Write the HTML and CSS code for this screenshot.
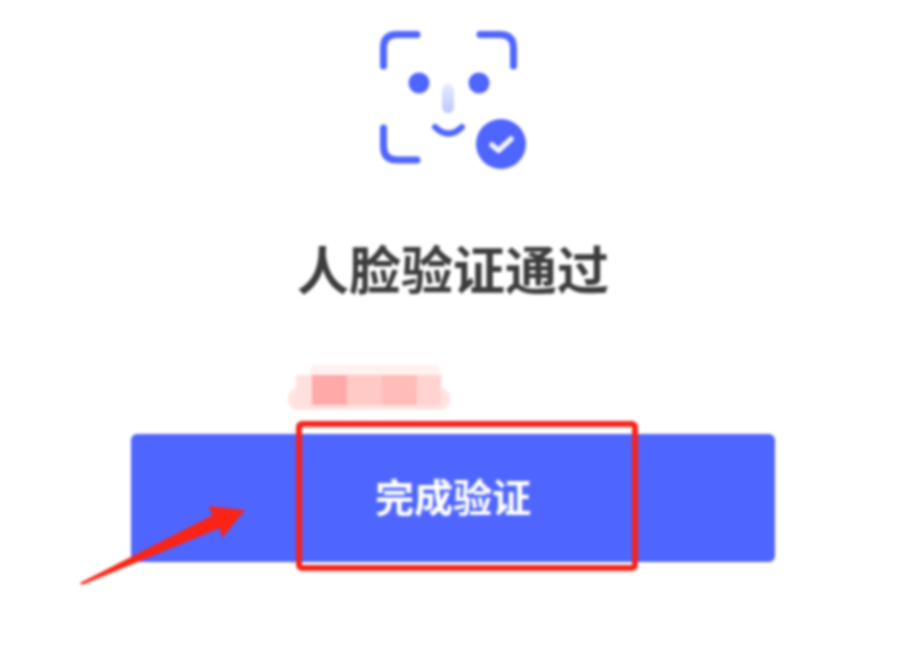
FILE: index.html
```html
<!DOCTYPE html>
<html lang="zh-CN">

<head>
    <meta charset="UTF-8">
    <meta name="viewport" content="width=device-width, initial-scale=1.0">
    <title>人脸验证通过</title>
    <link rel="stylesheet" href="styles.css">
</head>

<body>
    <div class="page">
        <svg class="face-icon" viewBox="0 0 180 165" width="180" height="165">
            <defs>
                <linearGradient id="nose-fade" x1="0" y1="0" x2="0" y2="1">
                    <stop offset="0" stop-color="#e6eaff" />
                    <stop offset="1" stop-color="#bcc7ff" />
                </linearGradient>
            </defs>
            <g fill="none" stroke="#4f65ff" stroke-width="7" stroke-linecap="round">
                <path d="M23.5 51V33Q23.5 19.5 37 19.5H57" />
                <path d="M120 19.5H140Q153.5 19.5 153.5 33V51" />
                <path d="M23.5 113V131Q23.5 145 37 145H57" />
                <path d="M75 112Q88.5 125 102 112" stroke-width="6" />
            </g>
            <circle cx="59" cy="68" r="10.5" fill="#4f65ff" />
            <circle cx="119" cy="68" r="10.5" fill="#4f65ff" />
            <rect x="82" y="69" width="12" height="29" rx="6" fill="url(#nose-fade)" />
            <circle cx="141" cy="129" r="25" fill="#4f65ff" />
            <path d="M132 130L138.500 135.500L151 124" fill="none" stroke="#f2f4ff" stroke-width="5.500" stroke-linecap="round" stroke-linejoin="round" />
        </svg>

        <h1 class="title">人脸验证通过</h1>

        <div class="action">
            <div class="redact">
                <div class="redact-top"></div>
                <div class="redact-cells">
                    <span class="cell cell-a"></span>
                    <span class="cell cell-b"></span>
                    <span class="cell cell-c"></span>
                    <span class="cell cell-d"></span>
                    <span class="cell cell-e"></span>
                </div>
            </div>
            <button class="done-btn">完成验证</button>
            <div class="red-frame"></div>
            <svg class="red-arrow" viewBox="0 0 180 90" width="180" height="90">
                <polygon points="3,84 136,16 131,7 168,11 145,39 143,29 5,86" fill="#fb2314" />
            </svg>
        </div>
    </div>
</body>

</html>
```

FILE: styles.css
```css
body {
    margin: 0;
    background: #fff;
    font-family: "Noto Sans CJK SC", "Liberation Sans", sans-serif;
}

.page {
    display: flex;
    flex-direction: column;
    align-items: center;
    width: 901px;
    height: 645px;
    overflow: hidden;
    padding-top: 15px;
    box-sizing: border-box;
    filter: blur(1.4px);
}

.face-icon {
    display: block;
    flex: none;
    margin-left: -1px;
}

.title {
    margin: 58px 0 0 5px;
    font-size: 52px;
    line-height: 60px;
    font-weight: 700;
    color: #3c3c3c;
}

.action {
    position: relative;
    width: 644px;
    margin-top: 67px;
    margin-left: 5px;
}

.redact {
    position: relative;
    width: 162px;
    height: 45px;
    margin-left: 157px;
}

.redact::after {
    content: "";
    position: absolute;
    left: 0;
    right: 0;
    bottom: 0;
    height: 22px;
    border-radius: 10px;
    background: #ffe3e1;
    z-index: 0;
}

.redact-top {
    height: 10px;
    margin: 0 10px 0 22px;
    border-radius: 5px 5px 0 0;
    background: #fff1ef;
}

.redact-cells {
    position: relative;
    z-index: 1;
    display: flex;
    height: 30px;
    margin-left: 8px;
}

.cell-a { width: 16px; background: #ffe0de; }
.cell-b { width: 35px; background: #ffa9a9; }
.cell-c { width: 35px; background: #ffc9c5; }
.cell-d { width: 35px; background: #ffbcb8; }
.cell-e { width: 24px; background: #ffd3d1; }

.done-btn {
    display: block;
    width: 644px;
    height: 128px;
    margin-top: 24px;
    border: none;
    border-radius: 6px;
    background: #4f65ff;
    color: #fff;
    font-family: inherit;
    font-size: 39px;
    font-weight: 700;
    padding: 0 0 6px;
}

.red-frame {
    position: absolute;
    left: 165px;
    top: 56px;
    width: 342px;
    height: 150px;
    box-sizing: border-box;
    border: 6px solid #f5231c;
    border-radius: 6px;
}

.red-arrow {
    position: absolute;
    left: -54px;
    top: 134px;
}
```
